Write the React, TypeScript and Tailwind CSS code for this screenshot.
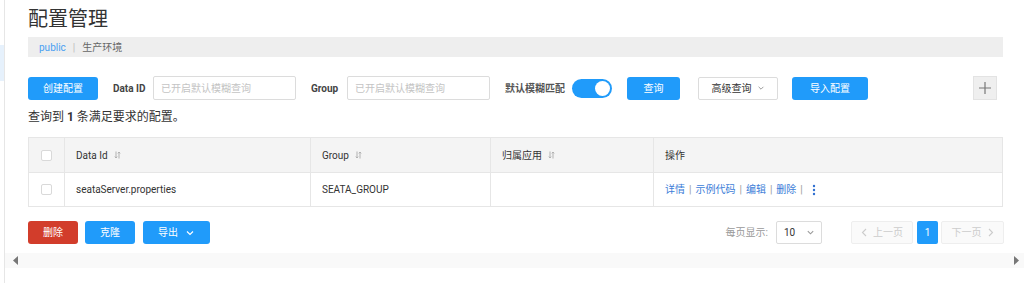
import React from "react";

function SortIcon() {
  return (
    <svg width="7" height="8" viewBox="0 0 7 8" className="ml-[6px] inline-block" fill="none" stroke="#aaa" strokeWidth="0.9">
      <path d="M2 0.5 V7 M0.8 5.6 L2 7 L3.2 5.6" />
      <path d="M5 7.5 V1 M3.8 2.4 L5 1 L6.2 2.4" />
    </svg>
  );
}

function Checkbox() {
  return <div className="h-[11px] w-[11px] rounded-[2px] border border-[#d9d9d9] bg-white" />;
}

function Chevron({ color = "#fff", size = 10 }: { color?: string; size?: number }) {
  return (
    <svg width={size} height={size} viewBox="0 0 10 10" fill="none" stroke={color} strokeWidth="1.2">
      <path d="M2 3.5 L5 6.5 L8 3.5" />
    </svg>
  );
}

export default function App() {
  return (
    <div className="flex h-[283px] w-[1024px] overflow-hidden bg-white font-[Roboto,'Noto_Sans_CJK_SC',sans-serif] text-[#333]">
      <div className="flex w-[5px] shrink-0 flex-col border-r border-[#e6e6e6]">
        <div className="h-[45px]" />
        <div className="h-[36px] bg-[#e6f1fc]" />
      </div>
      <div className="flex flex-1 flex-col">
        <div className="pl-[23px] pr-[21px]">
          <h1 className="pt-[5px] text-[20px] font-normal leading-[28px] text-[#333]">配置管理</h1>
          <div className="mt-[4px] flex h-[20px] items-center bg-[#eeeeee] pl-[11px] text-[10px]">
            <span className="text-[#4a9ff2]">public</span>
            <span className="mx-[7px] text-[#bbb]">|</span>
            <span className="text-[#666]">生产环境</span>
          </div>

          <div className="mt-[19px] flex h-[24px] items-center whitespace-nowrap text-[10px]">
            <button className="h-[23px] w-[70px] shrink-0 rounded-[3px] bg-[#209bfa] text-white">创建配置</button>
            <span className="ml-[15px] w-[32px] shrink-0 font-bold text-[#444]">Data ID</span>
            <div className="ml-[8px] flex h-[24px] w-[143px] shrink-0 items-center rounded-[2px] border border-[#dcdcdc] px-[7px] text-[#c4c4c4]">已开启默认模糊查询</div>
            <span className="ml-[15px] w-[27px] shrink-0 font-bold text-[#444]">Group</span>
            <div className="ml-[9px] flex h-[24px] w-[143px] shrink-0 items-center rounded-[2px] border border-[#dcdcdc] px-[7px] text-[#c4c4c4]">已开启默认模糊查询</div>
            <span className="ml-[15px] w-[60px] shrink-0 font-bold text-[#555]">默认模糊匹配</span>
            <div className="ml-[7px] flex h-[19px] w-[40px] shrink-0 items-center justify-end rounded-full bg-[#209bfa] pr-[2px]">
              <div className="h-[15px] w-[15px] rounded-full bg-white" />
            </div>
            <button className="ml-[15px] h-[23px] w-[53px] shrink-0 rounded-[3px] bg-[#209bfa] text-white">查询</button>
            <button className="ml-[18px] flex h-[23px] w-[80px] shrink-0 items-center justify-center gap-[5px] rounded-[2px] border border-[#dcdcdc] bg-white text-[#333]">
              高级查询 <Chevron color="#999" size={8} />
            </button>
            <button className="ml-[14px] h-[23px] w-[76px] shrink-0 rounded-[3px] bg-[#209bfa] text-white">导入配置</button>
            <button className="ml-auto mr-[6px] flex h-[24px] w-[24px] shrink-0 items-center justify-center border border-[#e3e3e3] bg-[#efefef]">
              <svg width="12" height="12" viewBox="0 0 12 12" stroke="#777" strokeWidth="1.2">
                <path d="M6 0 V12 M0 6 H12" />
              </svg>
            </button>
          </div>

          <div className="mt-[10px] text-[12px] leading-[15px] text-[#333]">
            查询到 <span className="font-bold">1</span> 条满足要求的配置。
          </div>

          <div className="mt-[12px] border border-[#e6e6e6] text-[10px]">
            <div className="grid h-[34px] grid-cols-[36px_246px_180px_163px_1fr] bg-[#f4f4f4]">
              <div className="flex items-center justify-center border-r border-[#e6e6e6]"><Checkbox /></div>
              <div className="flex items-center border-r border-[#e6e6e6] pl-[11px]">Data Id<SortIcon /></div>
              <div className="flex items-center border-r border-[#e6e6e6] pl-[11px]">Group<SortIcon /></div>
              <div className="flex items-center border-r border-[#e6e6e6] pl-[11px]">归属应用<SortIcon /></div>
              <div className="flex items-center pl-[11px]">操作</div>
            </div>
            <div className="grid h-[34px] grid-cols-[36px_246px_180px_163px_1fr] border-t border-[#e6e6e6] bg-white">
              <div className="flex items-center justify-center border-r border-[#e6e6e6]"><Checkbox /></div>
              <div className="flex items-center border-r border-[#e6e6e6] pl-[11px]">seataServer.properties</div>
              <div className="flex items-center border-r border-[#e6e6e6] pl-[11px]">SEATA_GROUP</div>
              <div className="flex items-center border-r border-[#e6e6e6] pl-[11px]"></div>
              <div className="flex items-center pl-[11px] text-[#3b7dd8]">
                <span>详情</span>
                <span className="mx-[4px] text-[#999]">|</span>
                <span>示例代码</span>
                <span className="mx-[4px] text-[#999]">|</span>
                <span>编辑</span>
                <span className="mx-[4px] text-[#999]">|</span>
                <span>删除</span>
                <span className="mx-[4px] text-[#999]">|</span>
                <svg width="6" height="12" viewBox="0 0 6 12" className="ml-[4px]" fill="#2f6fd0">
                  <circle cx="3" cy="2" r="1.2" />
                  <circle cx="3" cy="6" r="1.2" />
                  <circle cx="3" cy="10" r="1.2" />
                </svg>
              </div>
            </div>
          </div>

          <div className="mt-[14px] flex h-[23px] items-center whitespace-nowrap text-[10px]">
            <button className="h-[23px] w-[50px] rounded-[3px] bg-[#d23d2b] text-white">删除</button>
            <button className="ml-[7px] h-[23px] w-[50px] rounded-[3px] bg-[#209bfa] text-white">克隆</button>
            <button className="ml-[8px] flex h-[23px] w-[67px] items-center justify-center gap-[7px] rounded-[3px] bg-[#209bfa] text-white">
              导出 <Chevron color="#fff" size={10} />
            </button>
            <span className="ml-auto text-[#999]">每页显示:</span>
            <div className="ml-[8px] flex h-[23px] w-[46px] items-center justify-between rounded-[2px] border border-[#dcdcdc] pl-[7px] pr-[6px] text-[#333]">
              10 <Chevron color="#999" size={9} />
            </div>
            <div className="ml-[29px] flex h-[23px] w-[62px] items-center justify-center gap-[6px] rounded-[2px] border border-[#eee] bg-[#fafafa] text-[#ccc]">
              <svg width="6" height="9" viewBox="0 0 6 9" fill="none" stroke="#ccc" strokeWidth="1.1"><path d="M5 1 L1.5 4.5 L5 8" /></svg>
              上一页
            </div>
            <div className="ml-[4px] flex h-[23px] w-[21px] items-center justify-center rounded-[2px] bg-[#209bfa] text-white">1</div>
            <div className="ml-[3px] mr-[-1px] flex h-[23px] w-[63px] items-center justify-center gap-[6px] rounded-[2px] border border-[#eee] bg-[#fafafa] text-[#ccc]">
              下一页
              <svg width="6" height="9" viewBox="0 0 6 9" fill="none" stroke="#ccc" strokeWidth="1.1"><path d="M1 1 L4.5 4.5 L1 8" /></svg>
            </div>
          </div>
        </div>

        <div className="mt-[9px] flex h-[15px] items-center justify-between bg-[#f9f9f9] pl-[8px] pr-[5px]">
          <svg width="5" height="9" viewBox="0 0 5 9" fill="#777"><path d="M5 0 L0 4.5 L5 9 Z" /></svg>
          <svg width="5" height="9" viewBox="0 0 5 9" fill="#777"><path d="M0 0 L5 4.5 L0 9 Z" /></svg>
        </div>
      </div>
    </div>
  );
}
